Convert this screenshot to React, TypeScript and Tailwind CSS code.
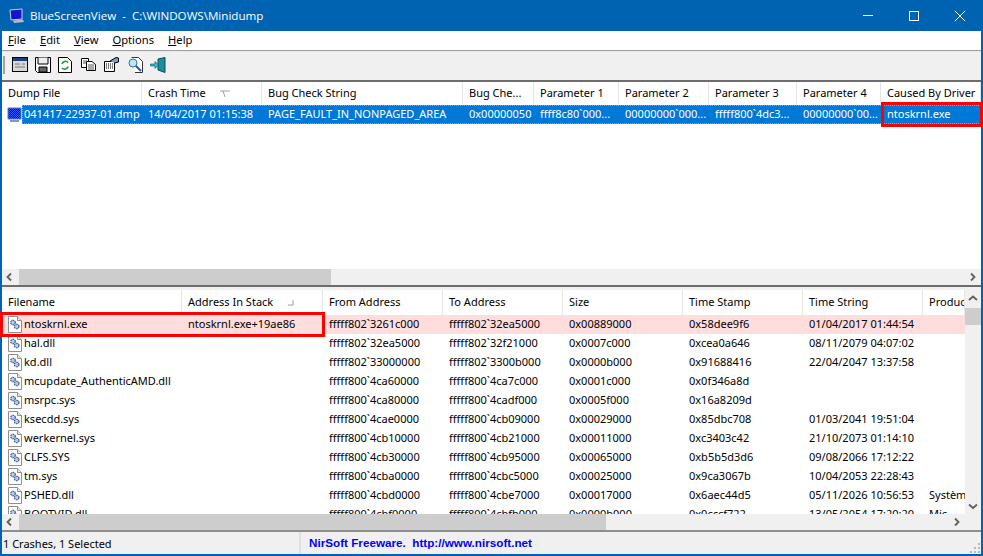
import React from 'react';

const font = "font-['Noto_Sans','Liberation_Sans',sans-serif]";

const topColumns = [
  { label: 'Dump File', cell: 'w-[140px]' },
  { label: 'Crash Time', cell: 'w-[120px]' },
  { label: 'Bug Check String', cell: 'w-[201px]' },
  { label: 'Bug Che...', cell: 'w-[71px]' },
  { label: 'Parameter 1', cell: 'w-[85px]' },
  { label: 'Parameter 2', cell: 'w-[90px]' },
  { label: 'Parameter 3', cell: 'w-[88px]' },
  { label: 'Parameter 4', cell: 'w-[84px]' },
  { label: 'Caused By Driver', cell: 'w-[100px]' },
];

const topRow = [
  '041417-22937-01.dmp',
  '14/04/2017 01:15:38',
  'PAGE_FAULT_IN_NONPAGED_AREA',
  '0x00000050',
  'ffff8c80`000...',
  '00000000`000...',
  'fffff800`4dc3...',
  '00000000`00...',
  'ntoskrnl.exe',
];

const bottomColumns = [
  { label: 'Filename', cell: 'w-[180px]' },
  { label: 'Address In Stack', cell: 'w-[141px]' },
  { label: 'From Address', cell: 'w-[120px]' },
  { label: 'To Address', cell: 'w-[120px]' },
  { label: 'Size', cell: 'w-[120px]' },
  { label: 'Time Stamp', cell: 'w-[120px]' },
  { label: 'Time String', cell: 'w-[120px]' },
  { label: 'Product Name', cell: 'w-[42px]' },
];

const modules = [
  ['ntoskrnl.exe', 'ntoskrnl.exe+19ae86', 'fffff802`3261c000', 'fffff802`32ea5000', '0x00889000', '0x58dee9f6', '01/04/2017 01:44:54', ''],
  ['hal.dll', '', 'fffff802`32ea5000', 'fffff802`32f21000', '0x0007c000', '0xcea0a646', '08/11/2079 04:07:02', ''],
  ['kd.dll', '', 'fffff802`33000000', 'fffff802`3300b000', '0x0000b000', '0x91688416', '22/04/2047 13:37:58', ''],
  ['mcupdate_AuthenticAMD.dll', '', 'fffff800`4ca60000', 'fffff800`4ca7c000', '0x0001c000', '0x0f346a8d', '', ''],
  ['msrpc.sys', '', 'fffff800`4ca80000', 'fffff800`4cadf000', '0x0005f000', '0x16a8209d', '', ''],
  ['ksecdd.sys', '', 'fffff800`4cae0000', 'fffff800`4cb09000', '0x00029000', '0x85dbc708', '01/03/2041 19:51:04', ''],
  ['werkernel.sys', '', 'fffff800`4cb10000', 'fffff800`4cb21000', '0x00011000', '0xc3403c42', '21/10/2073 01:14:10', ''],
  ['CLFS.SYS', '', 'fffff800`4cb30000', 'fffff800`4cb95000', '0x00065000', '0xb5b5d3d6', '09/08/2066 17:12:22', ''],
  ['tm.sys', '', 'fffff800`4cba0000', 'fffff800`4cbc5000', '0x00025000', '0x9ca3067b', '10/04/2053 22:28:43', ''],
  ['PSHED.dll', '', 'fffff800`4cbd0000', 'fffff800`4cbe7000', '0x00017000', '0x6aec44d5', '05/11/2026 10:56:53', 'Systèm'],
  ['BOOTVID.dll', '', 'fffff800`4cbf0000', 'fffff800`4cbfb000', '0x0000b000', '0x0cccf722', '13/05/2054 17:20:20', 'Mic'],
];

function HeaderCell({ label, cell, sort }: { label: string; cell: string; sort?: React.ReactNode }) {
  return (
    <div className={`${cell} shrink-0 h-full flex items-center pl-[6px] border-r border-[#e5e5e5] overflow-hidden whitespace-nowrap relative`}>
      {label}
      {sort}
    </div>
  );
}

function FileIcon() {
  return (
    <svg width="14" height="17" viewBox="0 0 14 17" className="shrink-0">
      <path d="M.5 .5H9.5L13.5 4.5V16.5H.5Z" fill="#fff" stroke="#8f8f8f" />
      <path d="M9.5 .5V4.5H13.5" fill="#e8e8e8" stroke="#8f8f8f" />
      <circle cx="5" cy="6.5" r="2.3" fill="#b9cbe4" stroke="#2f4f86" strokeWidth="1.1" strokeDasharray="1.6 .7" />
      <circle cx="8.7" cy="10.5" r="2.3" fill="#b9cbe4" stroke="#2f4f86" strokeWidth="1.1" strokeDasharray="1.6 .7" />
    </svg>
  );
}

function ToolbarIcons() {
  return (
    <div className="flex items-center h-full pb-[3px]">
      <div className="w-[2px] h-[18px] bg-[#a0a0a0]" />
      <svg width="16" height="15" viewBox="0 0 16 15" className="ml-[7px]">
        <rect x=".5" y=".5" width="15" height="14" fill="#d8d8d8" stroke="#000" />
        <rect x="1" y="1" width="14" height="3" fill="#1f3f7f" />
        <path d="M3 7H8M10 7H13M3 10H13" stroke="#777" />
      </svg>
      <svg width="16" height="16" viewBox="0 0 16 16" className="ml-[7px]">
        <path d="M.5 .5H15.5V15.5H2.5L.5 13.5Z" fill="#fff" stroke="#000" />
        <path d="M4 10H12V15H4Z" fill="#666" stroke="#000" />
        <path d="M3 .5V7H13V.5" fill="#eee" stroke="#000" />
      </svg>
      <svg width="14" height="16" viewBox="0 0 14 16" className="ml-[7px]">
        <path d="M.5 .5H9.5L13.5 4.5V15.5H.5Z" fill="#fff" stroke="#000" />
        <path d="M4 7A3.5 3.5 0 0 1 10 5.5" fill="none" stroke="#1a9a3a" strokeWidth="1.6" />
        <path d="M10 9.5A3.5 3.5 0 0 1 4 11" fill="none" stroke="#1a9a3a" strokeWidth="1.6" />
      </svg>
      <svg width="15" height="13" viewBox="0 0 15 13" className="ml-[9px]">
        <path d="M.5 .5H7.5V9.5H.5Z" fill="#fff" stroke="#000" />
        <path d="M5.5 3.5H11L14.5 6.5V12.5H5.5Z" fill="#fff" stroke="#000" />
        <path d="M7 7H13M7 9H13M7 11H13M2 3H6M2 5H5" stroke="#555" />
      </svg>
      <svg width="15" height="15" viewBox="0 0 15 15" className="ml-[8px]">
        <path d="M.5 4.5H10.5V14.5H.5Z" fill="#fff" stroke="#000" />
        <path d="M2 7H9M2 9H9M2 11H9" stroke="#000" strokeDasharray="1 1" />
        <path d="M6 4L12 .5L14.5 1V5L10.5 6" fill="#7e9cc8" stroke="#000" />
      </svg>
      <svg width="15" height="16" viewBox="0 0 15 16" className="ml-[9px]">
        <path d="M3.5 .5H10.5L14.5 4.5V15.5H7" fill="#fff" stroke="#333" />
        <circle cx="5" cy="6" r="4" fill="#bfe6f5" stroke="#3a6ea5" />
        <path d="M8 9L13 14" stroke="#2a50b5" strokeWidth="2" />
      </svg>
      <svg width="16" height="16" viewBox="0 0 16 16" className="ml-[7px]">
        <path d="M8 2L15 .5V15.5L8 13Z" fill="#1d8f9c" stroke="#0b4a52" />
        <path d="M.5 7H5V4.5L8.5 8L5 11.5V9H.5Z" fill="#19c6e0" stroke="#0b4a52" strokeWidth=".6" />
      </svg>
    </div>
  );
}

function Chevron({ dir, className }: { dir: 'left' | 'right' | 'up' | 'down'; className?: string }) {
  const d = {
    left: 'M7 3.5L3.5 7L7 10.5',
    right: 'M5 3.5L8.5 7L5 10.5',
    up: 'M3 8L7 4.5L11 8',
    down: 'M3 5.5L7 9L11 5.5',
  }[dir];
  return (
    <svg width="14" height="14" viewBox="0 0 14 14" className={className}>
      <path d={d} fill="none" stroke="#606060" strokeWidth="1.8" />
    </svg>
  );
}

function HScrollbar({ thumb, width }: { thumb: string; width: string }) {
  return (
    <div className={`${width} h-[16px] shrink-0 bg-[#f0f0f0] flex items-center`}>
      <div className="w-[17px] flex justify-center shrink-0"><Chevron dir="left" /></div>
      <div className={`${thumb} h-full bg-[#cdcdcd]`} />
      <div className="ml-auto w-[17px] flex justify-center shrink-0"><Chevron dir="right" /></div>
    </div>
  );
}

export default function App() {
  return (
    <div className={`${font} w-[983px] h-[556px] overflow-hidden flex flex-col bg-[#0063b1] text-[11px] text-black`}>
      <div className="h-[31px] shrink-0 flex items-center text-white">
        <svg width="16" height="16" viewBox="0 0 16 16" className="ml-[9px]">
          <path d="M1 2L13 1V11L2 12Z" fill="#1414c8" stroke="#c8cfe0" />
          <path d="M4 12.5L14 11.5L15 14L5 15Z" fill="#b8bcc8" />
        </svg>
        <span className="ml-[5px] text-[11.6px] font-['Open_Sans','Noto_Sans',sans-serif] whitespace-pre">BlueScreenView  -  C:\WINDOWS\Minidump</span>
        <div className="ml-auto flex items-center">
          <div className="w-[46px] flex justify-center">
            <div className="w-[10px] h-[1px] bg-white" />
          </div>
          <div className="w-[46px] flex justify-center">
            <div className="w-[10px] h-[10px] border border-white" />
          </div>
          <div className="w-[46px] flex justify-center">
            <svg width="10" height="10" viewBox="0 0 10 10">
              <path d="M0 0L10 10M10 0L0 10" stroke="#fff" />
            </svg>
          </div>
        </div>
      </div>

      <div className="flex-1 min-h-0 mx-[2px] mb-[2px] flex flex-col bg-[#f0f0f0]">
        <div className="h-[19px] shrink-0 bg-white flex items-center pl-[6px] gap-[14px] text-[11.2px] font-['Noto_Sans',sans-serif]">
          <span><u>F</u>ile</span>
          <span><u>E</u>dit</span>
          <span><u>V</u>iew</span>
          <span><u>O</u>ptions</span>
          <span><u>H</u>elp</span>
        </div>
        <div className="h-[2px] shrink-0 bg-[#a0a0a0] border-b border-[#e8e8e8]" />
        <div className="h-[28px] shrink-0 bg-[#f0f0f0] pl-[1px]">
          <ToolbarIcons />
        </div>

        <div className="relative h-[205px] shrink-0 bg-white border-t-2 border-[#6d6d6d] flex flex-col">
          <div className="h-[23px] shrink-0 flex items-center overflow-hidden">
            {topColumns.map((c, i) => (
              <HeaderCell
                key={c.label}
                label={c.label}
                cell={c.cell}
                sort={i === 1 ? (
                  <svg width="12" height="8" viewBox="0 0 12 8" className="ml-[13px]">
                    <path d="M1 1H11M4 1L6 7" stroke="#a0a0a0" fill="none" />
                  </svg>
                ) : undefined}
              />
            ))}
          </div>
          <div className="h-[19px] shrink-0 flex items-center whitespace-nowrap">
            <svg width="16" height="16" viewBox="0 0 16 16" className="ml-[5px] shrink-0 -mr-[1px]">
              <defs>
                <pattern id="dither" width="2" height="2" patternUnits="userSpaceOnUse">
                  <rect width="2" height="2" fill="#0000c8" />
                  <rect width="1" height="1" fill="#2a5cff" />
                  <rect x="1" y="1" width="1" height="1" fill="#2a5cff" />
                </pattern>
              </defs>
              <path d="M1 1H14V12H1Z" fill="url(#dither)" stroke="#5a78c0" />
              <path d="M3 13H12V15H3Z" fill="#7f95c8" />
            </svg>
            <div className="h-full flex items-center bg-[#0078d7] text-white outline-1 -outline-offset-1 outline-dotted outline-[#f08a3c]">
              {topRow.map((v, i) => (
                <div
                  key={v}
                  className={
                    i === 0
                      ? 'w-[120px] shrink-0 overflow-hidden pl-[2px]'
                      : `${topColumns[i].cell} shrink-0 overflow-hidden pl-[6px]`
                  }
                >
                  {v}
                </div>
              ))}
            </div>
          </div>
          <div className="flex-1" />
          <HScrollbar width="w-full" thumb="w-[312px]" />
          <div className="absolute left-[879px] top-[20px] w-[102px] h-[25px] border-[3px] border-[#ff0000]" />
        </div>

        <div className="h-[5px] shrink-0 bg-[#f0f0f0] border-t-2 border-[#6d6d6d]" />

        <div className="relative h-[240px] shrink-0 flex bg-white">
          <div className="w-[963px] shrink-0 flex flex-col">
            <div className="h-[25px] shrink-0 flex items-center overflow-hidden">
              {bottomColumns.map((c, i) => (
                <HeaderCell
                  key={c.label}
                  label={c.label}
                  cell={c.cell}
                  sort={i === 1 ? (
                    <svg width="6" height="6" viewBox="0 0 6 6" className="ml-[15px]">
                      <path d="M5 0V5H0" stroke="#a0a0a0" fill="none" />
                    </svg>
                  ) : undefined}
                />
              ))}
            </div>
            <div className="flex-1 min-h-0 overflow-hidden">
              {modules.map((row, r) => (
                <div key={row[0]} className={`h-[19px] flex items-center whitespace-nowrap ${r === 0 ? 'bg-[#ffdddd]' : ''}`}>
                  {row.map((v, i) => (
                    <div
                      key={i}
                      className={`${bottomColumns[i].cell} shrink-0 overflow-hidden pl-[6px] ${i === 0 ? 'flex items-center gap-[2px]' : ''}`}
                    >
                      {i === 0 && <FileIcon />}
                      {v}
                    </div>
                  ))}
                </div>
              ))}
            </div>
            <HScrollbar width="w-full" thumb="w-[587px]" />
          </div>
          <div className="flex-1 flex flex-col bg-[#f0f0f0]">
            <div className="h-[18px] flex items-center justify-center"><Chevron dir="up" /></div>
            <div className="h-[17px] bg-[#cdcdcd]" />
            <div className="flex-1" />
            <div className="h-[17px] flex items-center justify-center"><Chevron dir="down" /></div>
            <div className="h-[16px]" />
          </div>
          <div className="absolute -left-[2px] top-[22px] w-[325px] h-[25px] border-[3px] border-[#ff0000]" />
        </div>

        <div className="flex-1 min-h-0 flex items-center bg-[#f0f0f0] border-t-2 border-[#8e8e8e] relative">
          <div className="w-[299px] pl-[1px] pt-[3px] h-full flex items-center border-r-2 border-[#e0e0e0] shrink-0">1 Crashes, 1 Selected</div>
          <div className="pl-[8px] text-[11.7px] text-[#0000ff] font-bold font-['Liberation_Sans',sans-serif] whitespace-pre">NirSoft Freeware.  http://www.nirsoft.net</div>
          <svg width="12" height="12" viewBox="0 0 12 12" className="absolute right-0 bottom-0">
            <path d="M9 1h2v2H9zM5 5h2v2H5zM9 5h2v2H9zM1 9h2v2H1zM5 9h2v2H5zM9 9h2v2H9z" fill="#b8b8b8" />
          </svg>
        </div>
      </div>
    </div>
  );
}
